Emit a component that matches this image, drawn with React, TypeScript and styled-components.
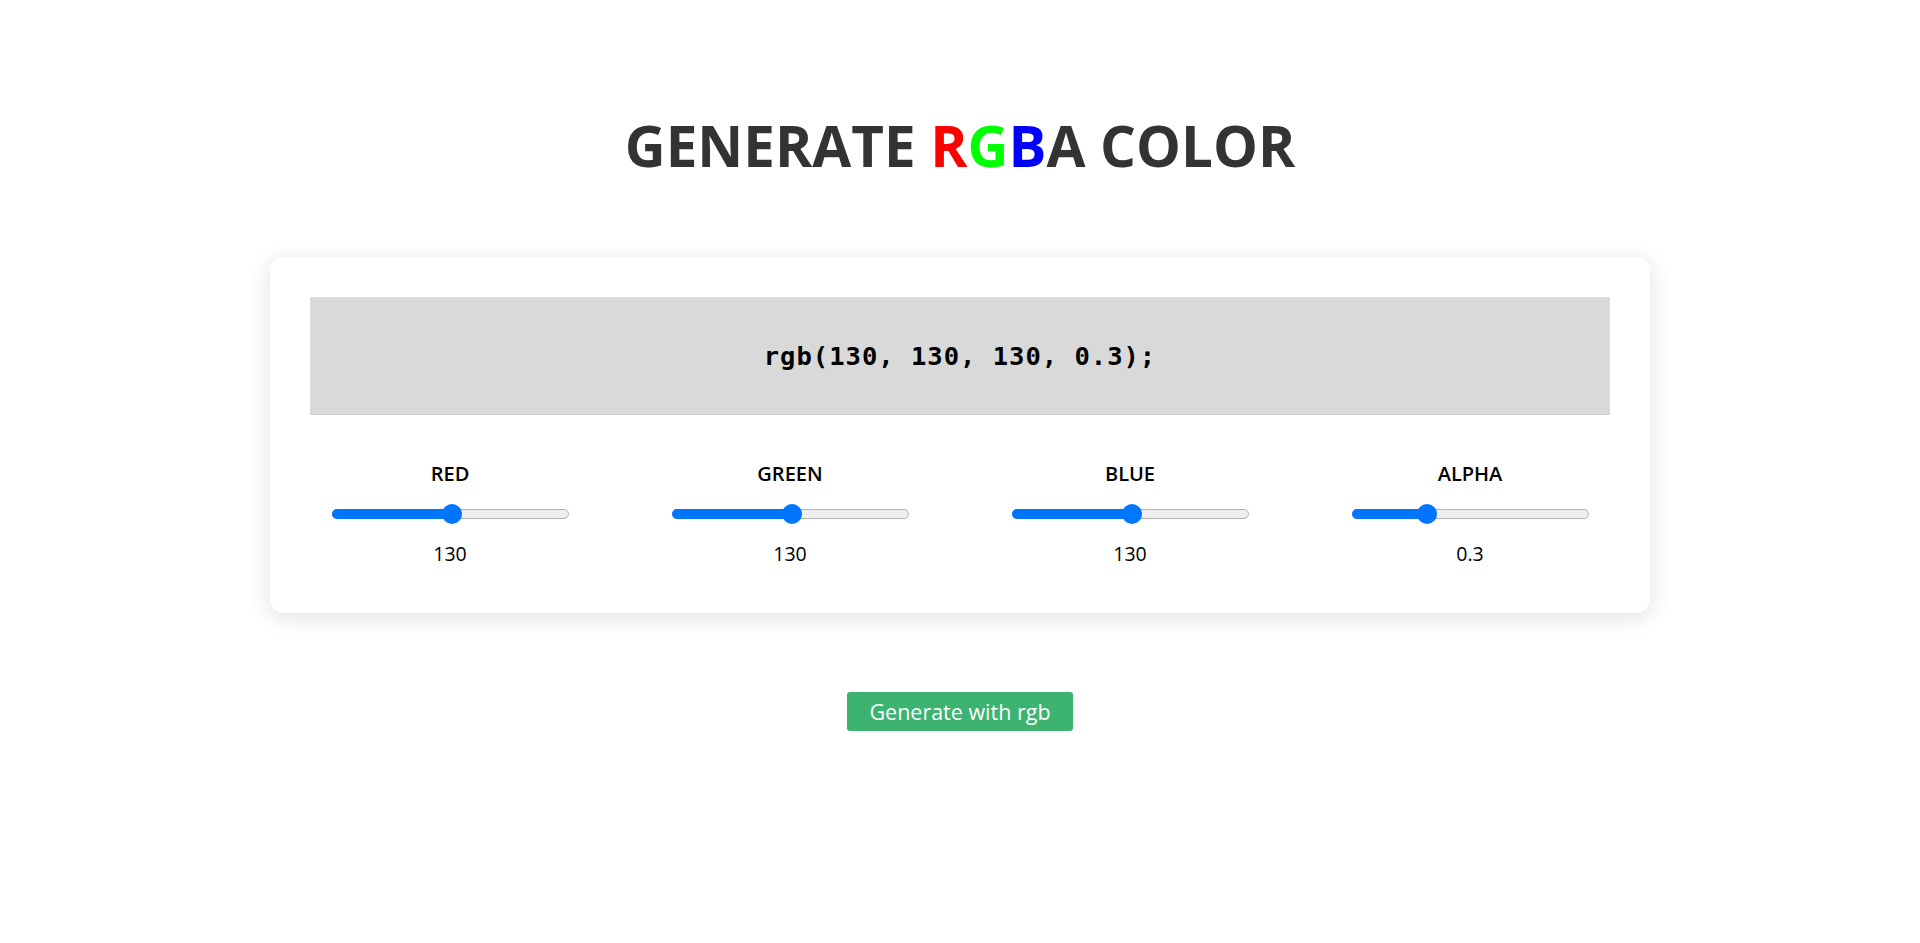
import React, { useState } from "react";
import styled, { createGlobalStyle } from "styled-components";

const GlobalStyle = createGlobalStyle`
  html, body {
    margin: 0;
    padding: 0;
    background: #ffffff;
  }
  body {
    font-family: "Open Sans", "Noto Sans", sans-serif;
    color: #000;
  }
  * { box-sizing: border-box; }
`;

const Page = styled.main`
  display: flex;
  flex-direction: column;
  align-items: center;
  min-height: 943px;
  padding-top: 106px;
`;

const Title = styled.h1`
  margin: 0;
  font-family: "Open Sans", "Noto Sans", sans-serif;
  font-weight: 700;
  font-size: 56.5px;
  line-height: 80px;
  color: #333333;
  letter-spacing: 0;
`;

const Letter = styled.span<{ $color: string }>`
  color: ${(p) => p.$color};
`;

const Card = styled.section`
  margin-top: 71px;
  width: 1380px;
  padding: 40px 40px 40px;
  background: #fff;
  border-radius: 14px;
  box-shadow: 0 4px 22px rgba(0, 0, 0, 0.13);
`;

const Display = styled.div`
  height: 118px;
  display: flex;
  align-items: center;
  justify-content: center;
  border-bottom: 1px solid #cdcdcd;
  font-family: "DejaVu Sans Mono", "Liberation Mono", monospace;
  font-weight: 700;
  font-size: 25.5px;
  letter-spacing: 1px;
  color: #000;
`;

const Controls = styled.div`
  display: flex;
  justify-content: space-between;
  margin-top: 44px;
  padding-bottom: 4px;
`;

const Control = styled.div`
  width: 280px;
  display: flex;
  flex-direction: column;
  align-items: center;
`;

const Label = styled.label`
  font-family: "Open Sans", "Noto Sans", sans-serif;
  font-weight: 600;
  font-size: 20px;
  line-height: 30px;
  color: #000;
`;

const SliderWrap = styled.div`
  position: relative;
  width: 237px;
  height: 20px;
  margin-top: 15px;
  display: flex;
  align-items: center;
`;

const Track = styled.div`
  width: 100%;
  height: 10px;
  border-radius: 5px;
  background: #efefef;
  border: 1px solid #b2b2b2;
`;

const Fill = styled.div`
  position: absolute;
  left: 0;
  top: 5px;
  height: 10px;
  border-radius: 5px;
  background: #0075ff;
`;

const Range = styled.input`
  position: absolute;
  inset: 0;
  width: 100%;
  height: 20px;
  margin: 0;
  background: transparent;
  -webkit-appearance: none;
  appearance: none;
  cursor: pointer;

  &::-webkit-slider-runnable-track {
    height: 20px;
    background: transparent;
  }
  &::-webkit-slider-thumb {
    -webkit-appearance: none;
    appearance: none;
    width: 20px;
    height: 20px;
    border-radius: 50%;
    background: #0075ff;
    border: none;
  }
  &::-moz-range-thumb {
    width: 20px;
    height: 20px;
    border-radius: 50%;
    background: #0075ff;
    border: none;
  }
  &:focus {
    outline: none;
  }
`;

const Value = styled.div`
  margin-top: 15px;
  font-family: "Open Sans", "Noto Sans", sans-serif;
  font-size: 19.5px;
  line-height: 30px;
  color: #000;
`;

const Button = styled.button`
  margin-top: 79px;
  height: 39px;
  padding: 0 22px;
  border: none;
  border-radius: 3px;
  background: #3cb371;
  color: #fff;
  font-family: "Open Sans", "Noto Sans", sans-serif;
  font-size: 21.5px;
  cursor: pointer;
`;

type Channel = {
  key: string;
  label: string;
  max: number;
  step: number;
};

const channels: Channel[] = [
  { key: "r", label: "RED", max: 255, step: 1 },
  { key: "g", label: "GREEN", max: 255, step: 1 },
  { key: "b", label: "BLUE", max: 255, step: 1 },
  { key: "a", label: "ALPHA", max: 1, step: 0.1 },
];

function Slider({
  label,
  value,
  max,
  step,
  onChange,
}: {
  label: string;
  value: number;
  max: number;
  step: number;
  onChange: (v: number) => void;
}) {
  const frac = value / max;
  const fillWidth = 10 + (237 - 20) * frac;
  return (
    <Control>
      <Label>{label}</Label>
      <SliderWrap>
        <Track />
        <Fill style={{ width: `${fillWidth}px` }} />
        <Range
          type="range"
          min={0}
          max={max}
          step={step}
          value={value}
          onChange={(e) => onChange(parseFloat(e.target.value))}
        />
      </SliderWrap>
      <Value>{value}</Value>
    </Control>
  );
}

export default function App() {
  const [vals, setVals] = useState<Record<string, number>>({
    r: 130,
    g: 130,
    b: 130,
    a: 0.3,
  });

  const text = `rgb(${vals.r}, ${vals.g}, ${vals.b}, ${vals.a});`;
  const bg = `rgba(${vals.r}, ${vals.g}, ${vals.b}, ${vals.a})`;

  return (
    <>
      <GlobalStyle />
      <Page>
        <Title>
          GENERATE <Letter $color="#ff0000">R</Letter>
          <Letter $color="#00ff00">G</Letter>
          <Letter $color="#0000ff">B</Letter>A COLOR
        </Title>
        <Card>
          <Display style={{ background: bg }}>{text}</Display>
          <Controls>
            {channels.map((c) => (
              <Slider
                key={c.key}
                label={c.label}
                value={vals[c.key]}
                max={c.max}
                step={c.step}
                onChange={(v) => setVals((p) => ({ ...p, [c.key]: v }))}
              />
            ))}
          </Controls>
        </Card>
        <Button type="button">Generate with rgb</Button>
      </Page>
    </>
  );
}
